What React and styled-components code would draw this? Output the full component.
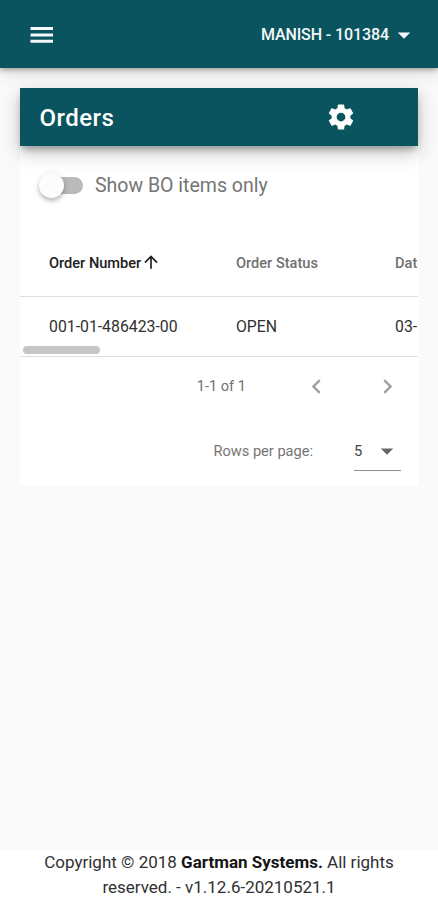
import React from "react"
import styled, { createGlobalStyle } from "styled-components"
import {
  MdArrowUpward,
  MdArrowDropDown,
  MdChevronLeft,
  MdChevronRight,
} from "react-icons/md"

const GlobalStyle = createGlobalStyle`
  * {
    box-sizing: border-box;
  }
  body {
    margin: 0;
    background: #fafafa;
    font-family: Roboto, "Liberation Sans", sans-serif;
  }
`
const Page = styled.div`
  height: 900px;
  display: flex;
  flex-direction: column;
  overflow: hidden;
`
const AppBar = styled.header`
  height: 68px;
  flex: none;
  display: flex;
  align-items: center;
  justify-content: space-between;
  padding: 1px 19px 0 30px;
  color: #f4f8f9;
  background: #0a545f;
  box-shadow: 0 2px 5px rgba(60, 50, 35, 0.38), 0 5px 16px rgba(0, 0, 0, 0.12);
`
const AccountButton = styled.button`
  display: flex;
  align-items: center;
  padding: 0;
  border: 0;
  background: none;
  color: inherit;
  font: 500 16px/24px Roboto, sans-serif;
  white-space: nowrap;
`
const Label = styled.span`
  letter-spacing: ${(props) => props.$spacing || 0}px;
  white-space: nowrap;
`
const Main = styled.main`
  flex: 1;
  padding: 20px 19px 0 20px;
`
const Card = styled.section`
  height: 398px;
  border-radius: 4px;
  background: #fff;
`
const CardHeader = styled.div`
  height: 58px;
  display: flex;
  align-items: center;
  justify-content: space-between;
  padding: 0 62px 0 19.5px;
  margin-right: 1px;
  color: #fff;
  background: #0a545f;
  box-shadow: 0 5px 7px -2px rgba(0, 0, 0, 0.3),
    0 7px 20px rgba(0, 0, 0, 0.22);
`
const Title = styled.h1`
  margin: 0;
  padding-top: 1px;
  font-size: 24px;
  font-weight: 500;
`
const SwitchRow = styled.label`
  height: 84px;
  display: flex;
  align-items: flex-start;
  padding: 25px 0 0 18px;
  color: #757575;
  font-size: 19.5px;
  line-height: 29px;
`
const SwitchTrack = styled.span`
  position: relative;
  width: 45px;
  height: 17px;
  margin: 6px 12px 0 0;
  border-radius: 9px;
  background: linear-gradient(to right, transparent 14px, #bababa 14px);
`
const SwitchThumb = styled.span`
  position: absolute;
  top: -4px;
  left: 1px;
  width: 25px;
  height: 25px;
  border-radius: 50%;
  background: #fcfcfc;
  box-shadow: 0 3px 4px rgba(0, 0, 0, 0.22), 0 1px 7px rgba(0, 0, 0, 0.1);
`
const TableWrap = styled.div`
  position: relative;
  height: 127px;
  margin-right: 1px;
  overflow: hidden;
`
const TableRow = styled.div`
  display: grid;
  grid-template-columns: 187px 159px 1fr;
  align-items: center;
  height: ${(props) => (props.$head ? 67 : 60)}px;
  padding-left: 29px;
  border-bottom: 1px solid #dedede;
  color: ${(props) => (props.$head ? "#707070" : "#303030")};
  font-size: ${(props) => (props.$head ? 14.6 : 15.8)}px;
  font-weight: ${(props) => (props.$head ? 500 : 400)};
`
const Cell = styled.div`
  display: flex;
  align-items: center;
  white-space: nowrap;
  color: ${(props) => (props.$sorted ? "#202020" : "inherit")};

  svg {
    margin-top: -2px;
  }
`
const ScrollThumb = styled.div`
  position: absolute;
  left: 3px;
  bottom: 3px;
  width: 77px;
  height: 8px;
  border-radius: 4px;
  background: #c6c6c6;
`
const Pagination = styled.div`
  height: 60px;
  display: flex;
  align-items: center;
  justify-content: flex-end;
  padding: 0 17px 2px 0;
  color: #707070;
  font-size: 14.6px;
`
const PageButton = styled.button`
  display: flex;
  padding: 0;
  margin-left: ${(props) => props.$gap}px;
  border: 0;
  background: none;
  color: #a0a0a0;
`
const RowsPerPage = styled.div`
  height: 69px;
  display: flex;
  align-items: center;
  justify-content: flex-end;
  padding: 0 18px 2px 0;
  color: #757575;
  font-size: 14.6px;
`
const Select = styled.div`
  width: 47px;
  height: 40px;
  display: flex;
  align-items: center;
  justify-content: space-between;
  margin-left: 41px;
  padding-top: 1px;
  border-bottom: 1px solid #929292;
  color: #424242;

  svg {
    color: #666;
    margin-right: -1px;
  }
`
const Footer = styled.footer`
  height: 50px;
  flex: none;
  background: #fff;
  color: #303030;
  font-size: 17px;
  line-height: 25px;
  text-align: center;

  strong {
    color: #151515;
  }
`

function MenuIcon() {
  return (
    <svg width="23" height="16" viewBox="0 0 23 16" fill="currentColor">
      <path d="M.5 0h22.5v3H.5zM.5 6.4h22.5v3H.5zM.5 12.8h22.5v3H.5z" />
    </svg>
  )
}

function CogIcon() {
  return (
    <svg width="30" height="30" viewBox="0 0 24 24" fill="currentColor">
      <path d="M12,15.5A3.5,3.5 0 0,1 8.5,12A3.5,3.5 0 0,1 12,8.5A3.5,3.5 0 0,1 15.5,12A3.5,3.5 0 0,1 12,15.5M19.43,12.97C19.47,12.65 19.5,12.33 19.5,12C19.5,11.67 19.47,11.34 19.43,11L21.54,9.37C21.73,9.22 21.78,8.95 21.66,8.73L19.66,5.27C19.54,5.05 19.27,4.96 19.05,5.05L16.56,6.05C16.04,5.66 15.5,5.32 14.87,5.07L14.5,2.42C14.46,2.18 14.25,2 14,2H10C9.75,2 9.54,2.18 9.5,2.42L9.13,5.07C8.5,5.32 7.96,5.66 7.44,6.05L4.95,5.05C4.73,4.96 4.46,5.05 4.34,5.27L2.34,8.73C2.21,8.95 2.27,9.22 2.46,9.37L4.57,11C4.53,11.34 4.5,11.67 4.5,12C4.5,12.33 4.53,12.65 4.57,12.97L2.46,14.63C2.27,14.78 2.21,15.05 2.34,15.27L4.34,18.73C4.46,18.95 4.73,19.03 4.95,18.95L7.44,17.94C7.96,18.34 8.5,18.68 9.13,18.93L9.5,21.58C9.54,21.82 9.75,22 10,22H14C14.25,22 14.46,21.82 14.5,21.58L14.87,18.93C15.5,18.67 16.04,18.34 16.56,17.94L19.05,18.95C19.27,19.03 19.54,18.95 19.66,18.73L21.66,15.27C21.78,15.05 21.73,14.78 21.54,14.63L19.43,12.97Z" />
    </svg>
  )
}

export default function App() {
  return (
    <>
      <GlobalStyle />
      <Page>
        <AppBar>
          <MenuIcon />
          <AccountButton>
            <Label $spacing={-0.1}>MANISH - 101384</Label>
            <MdArrowDropDown size={30} />
          </AccountButton>
        </AppBar>
        <Main>
          <Card>
            <CardHeader>
              <Title>
                <Label $spacing={0.45}>Orders</Label>
              </Title>
              <CogIcon />
            </CardHeader>
            <SwitchRow>
              <SwitchTrack>
                <SwitchThumb />
              </SwitchTrack>
              <Label>Show BO items only</Label>
            </SwitchRow>
            <TableWrap>
              <TableRow $head>
                <Cell $sorted>
                  <Label>Order Number</Label>
                  <MdArrowUpward size={20} />
                </Cell>
                <Cell>
                  <Label>Order Status</Label>
                </Cell>
                <Cell>
                  <Label>Dat</Label>
                </Cell>
              </TableRow>
              <TableRow>
                <Cell>
                  <Label>001-01-486423-00</Label>
                </Cell>
                <Cell>
                  <Label>OPEN</Label>
                </Cell>
                <Cell>
                  <Label>03-</Label>
                </Cell>
              </TableRow>
              <ScrollThumb />
            </TableWrap>
            <Pagination>
              <Label>1-1 of 1</Label>
              <PageButton $gap={56}>
                <MdChevronLeft size={29} />
              </PageButton>
              <PageButton $gap={42}>
                <MdChevronRight size={29} />
              </PageButton>
            </Pagination>
            <RowsPerPage>
              <Label>Rows per page:</Label>
              <Select>
                <Label>5</Label>
                <MdArrowDropDown size={30} />
              </Select>
            </RowsPerPage>
          </Card>
        </Main>
        <Footer>
          <Label>
            Copyright © 2018 <strong>Gartman Systems.</strong> All rights
          </Label>
          <br />
          <Label>reserved. - v1.12.6-20210521.1</Label>
        </Footer>
      </Page>
    </>
  )
}
